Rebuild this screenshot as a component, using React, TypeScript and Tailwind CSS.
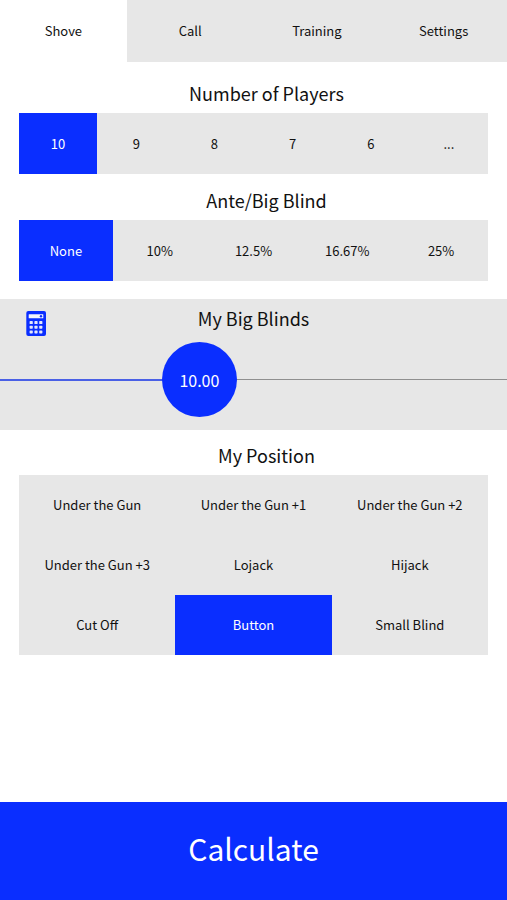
import { useState } from 'react';
import clsx from 'clsx';

const tabs = ['Shove', 'Call', 'Training', 'Settings'];
const playerCounts = ['10', '9', '8', '7', '6', '...'];
const antes = ['None', '10%', '12.5%', '16.67%', '25%'];
const positions = [
  'Under the Gun',
  'Under the Gun +1',
  'Under the Gun +2',
  'Under the Gun +3',
  'Lojack',
  'Hijack',
  'Cut Off',
  'Button',
  'Small Blind',
];

const MIN_BLINDS = 1;
const MAX_BLINDS = 25;

function CalculatorIcon() {
  return (
    <svg viewBox="0 0 20 25" className="w-5 h-[25px]" aria-hidden="true">
      <rect x="0.3" width="19.7" height="25" rx="2" fill="#0a2eff" />
      <rect x="2.7" y="3.2" width="14.6" height="4.1" rx="0.4" fill="#f2f3fb" />
      <circle cx="15" cy="5.2" r="1.2" fill="#0a2eff" />
      {[10, 14.7, 19.4].map((y) =>
        [3.6, 8.4, 13.2].map((x) => (
          <rect key={`${x}-${y}`} x={x} y={y} width="3.2" height="3.1" rx="0.7" fill="#e4e7fa" />
        ))
      )}
    </svg>
  );
}

type OptionGroupProps = {
  title: string;
  options: string[];
  value: string;
  onChange: (value: string) => void;
  columns: string;
};

function OptionGroup({ title, options, value, onChange, columns }: OptionGroupProps) {
  return (
    <section>
      <h2 className="pl-[26px] mb-[6px] text-center text-lg leading-7">{title}</h2>
      <div className={clsx('grid mx-[19px] bg-[#e7e7e7]', columns)} role="group" aria-label={title}>
        {options.map((option) => (
          <button
            key={option}
            type="button"
            aria-pressed={option === value}
            onClick={() => onChange(option)}
            className={clsx(
              'text-[13px] leading-5 cursor-pointer',
              option === value && 'bg-[#0a2eff] text-white'
            )}
          >
            {option}
          </button>
        ))}
      </div>
    </section>
  );
}

function App() {
  const [tab, setTab] = useState('Shove');
  const [players, setPlayers] = useState('10');
  const [ante, setAnte] = useState('None');
  const [position, setPosition] = useState('Button');
  const [blinds, setBlinds] = useState(10);

  const ratio = (blinds - MIN_BLINDS) / (MAX_BLINDS - MIN_BLINDS);
  const thumbCenter = `calc(37px + (100% - 74px) * ${ratio})`;

  return (
    <div className="min-h-screen flex flex-col bg-white text-[#111] font-['Noto_Sans_CJK_SC','Noto_Sans',sans-serif]">
      <nav className="grid grid-cols-4 bg-[#e7e7e7]">
        {tabs.map((name) => (
          <button
            key={name}
            type="button"
            aria-current={name === tab ? 'page' : undefined}
            onClick={() => setTab(name)}
            className={clsx('h-[62px] text-[13px] leading-5 cursor-pointer', name === tab && 'bg-white')}
          >
            {name}
          </button>
        ))}
      </nav>

      <main className="flex-1 pt-[17px]">
        <div className="flex flex-col gap-3">
          <OptionGroup
            title="Number of Players"
            options={playerCounts}
            value={players}
            onChange={setPlayers}
            columns="grid-cols-6 auto-rows-[61px]"
          />
          <OptionGroup
            title="Ante/Big Blind"
            options={antes}
            value={ante}
            onChange={setAnte}
            columns="grid-cols-5 auto-rows-[61px]"
          />
        </div>

        <section className="relative mt-[18px] mb-[11px] pt-[5px] pb-[13px] bg-[#e7e7e7]">
          <button type="button" aria-label="Blinds calculator" className="absolute left-[26px] top-3 cursor-pointer">
            <CalculatorIcon />
          </button>
          <label htmlFor="blinds" className="block mb-[10px] text-center text-lg leading-7">
            My Big Blinds
          </label>
          <div className="relative flex items-center h-[75px]">
            <div className="flex-1 h-px bg-[#8f8f8f]" />
            <div className="absolute left-0 h-[2px] bg-[#4a60e6]" style={{ width: thumbCenter }} />
            <input
              id="blinds"
              type="range"
              min={MIN_BLINDS}
              max={MAX_BLINDS}
              step={0.25}
              value={blinds}
              onChange={(e) => setBlinds(Number(e.target.value))}
              className="absolute inset-0 w-full h-full appearance-none bg-transparent cursor-pointer [&::-webkit-slider-thumb]:appearance-none [&::-webkit-slider-thumb]:size-[75px] [&::-webkit-slider-thumb]:rounded-full [&::-webkit-slider-thumb]:bg-[#0a2eff]"
            />
            <output
              htmlFor="blinds"
              className="absolute -translate-x-1/2 text-base leading-7 text-white pointer-events-none"
              style={{ left: thumbCenter }}
            >
              {blinds.toFixed(2)}
            </output>
          </div>
        </section>

        <OptionGroup
          title="My Position"
          options={positions}
          value={position}
          onChange={setPosition}
          columns="grid-cols-3 auto-rows-[60px]"
        />
      </main>

      <button type="button" className="h-[98px] pb-[6px] bg-[#0a2eff] text-white text-3xl cursor-pointer">
        Calculate
      </button>
    </div>
  );
}

export default App;
